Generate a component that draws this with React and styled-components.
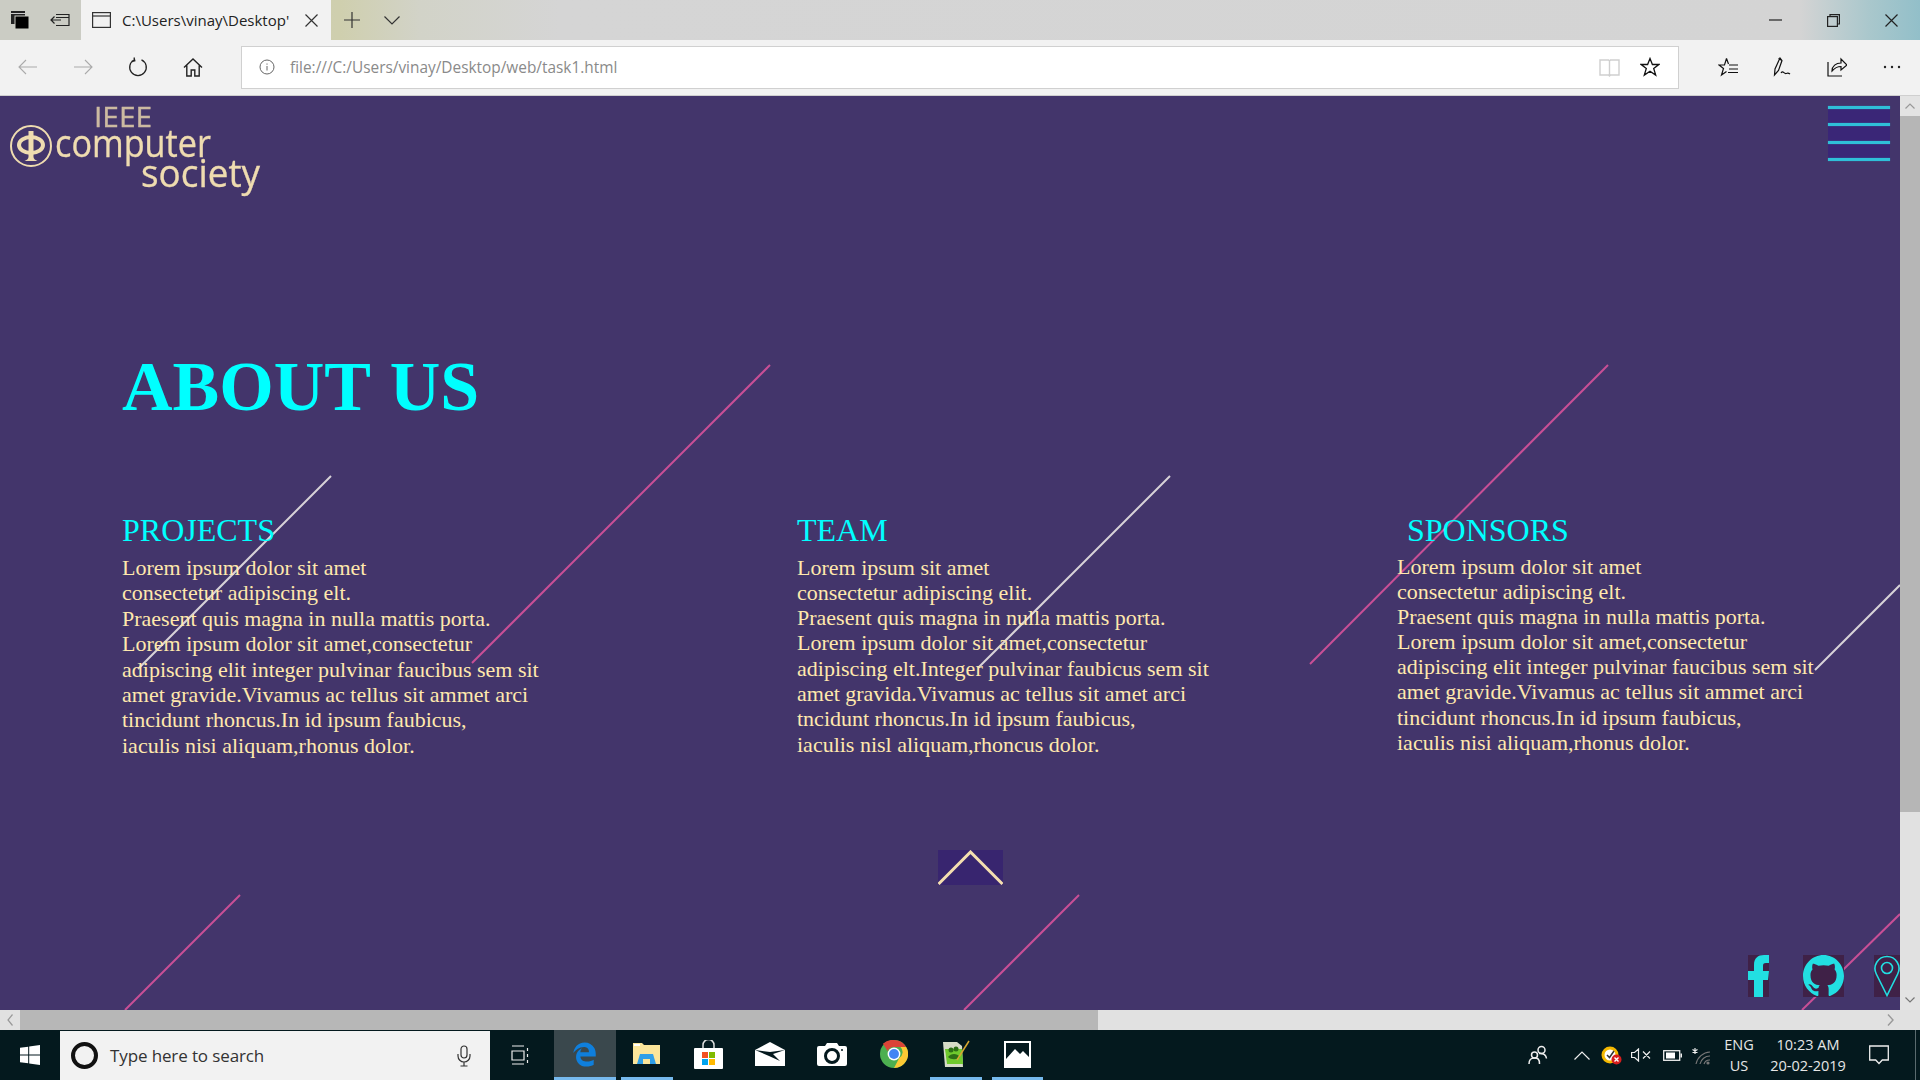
import React from 'react';
import styled, { createGlobalStyle } from 'styled-components';
import { FaEdgeLegacy } from 'react-icons/fa';

const Global = createGlobalStyle`
  html, body { margin: 0; padding: 0; width: 1920px; height: 1080px; overflow: hidden; background: #43356b; }
  * { box-sizing: border-box; }
`;

const UI = `"Open Sans", "Noto Sans", sans-serif`;

const Screen = styled.div`
  width: 1920px; height: 1080px; display: flex; flex-direction: column; overflow: hidden; font-family: ${UI};
`;

/* ---------- title bar ---------- */
const TitleBar = styled.div`
  height: 40px; flex: none; display: flex; align-items: stretch;
  background: linear-gradient(90deg, #cbccc4 0, #cbccc4 81px, #cfcfae 340px, #d2d3c8 420px, #d5d5d5 560px, #d4d4d4 1800px, #a9c7cc 1870px, #92bfc9 1920px);
`;
const ChromeBtn = styled.div`
  width: ${p => p.$w}px; flex: none; display: flex; align-items: center; justify-content: center; color: ${p => p.$c || '#1a1a1a'};
`;
const Tab = styled.div`
  width: 250px; margin-left: 1px; flex: none; background: #f2f2f2; display: flex; align-items: center; padding-left: 11px; position: relative;
`;
const TabTitle = styled.span`
  margin-left: 11px; width: 168px; overflow: hidden; white-space: nowrap; font-size: 15px; color: #222;
`;
const TabClose = styled.span`
  margin-left: 15px; display: flex;
`;
const Grow = styled.div` flex: 1; `;

/* ---------- toolbar ---------- */
const Toolbar = styled.div`
  height: 56px; flex: none; display: flex; align-items: center; background: #f2f2f2; border-bottom: 1px solid #cfcfcf; padding-bottom: 1px;
`;
const ToolBtn = styled.div`
  width: 55px; height: 55px; flex: none; display: flex; align-items: center; justify-content: center; padding-right: ${p => p.$pr || 0}px;
`;
const Address = styled.div`
  width: 1438px; height: 43px; margin: 0 21px; flex: none; background: #fff; border: 1.5px solid #d0d0d0;
  display: flex; align-items: center; padding: 0 18px 0 17px;
`;
const Url = styled.span`
  margin-left: 15px; flex: 1; font-size: 15.4px; color: #8a8a8a;
`;
const AddrIcon = styled.span`
  display: flex; margin-left: ${p => p.$ml || 0}px;
`;

/* ---------- viewport ---------- */
const ViewRow = styled.div`
  height: 914px; flex: none; display: flex;
`;
const Page = styled.main`
  width: 1900px; height: 914px; flex: none; position: relative; overflow: hidden; background: #43356b; font-family: "Liberation Serif", "Times New Roman", serif;
`;
const Lines = styled.svg`
  position: absolute; left: 0; top: 0; width: 1900px; height: 914px;
`;
const Content = styled.div`
  position: relative; display: flex; flex-direction: column; height: 100%;
`;
const Header = styled.header`
  height: 110px; display: flex; justify-content: space-between; align-items: flex-start;
`;
const LogoSvg = styled.svg`
  width: 280px; height: 110px; display: block;
  text { font-family: "Open Sans", "Noto Sans", sans-serif; fill: #efdcb0; stroke: #efdcb0; stroke-width: 0.35px; }
  filter: blur(0.5px);
`;
const Burger = styled.div`
  width: 62px; height: 55px; margin: 10px 10px 0 0; display: flex; flex-direction: column; justify-content: space-between; background: #3a2677;
`;
const BurgerBar = styled.span`
  display: block; height: 3px; background: #2fbfd8; box-shadow: 0 0 1px #2fbfd8;
`;
const Title = styled.h1`
  margin: 141px 0 0 122px; font-size: 70px; line-height: 80px; font-weight: 700; color: #00ffff; word-spacing: 2.5px;
`;
const Columns = styled.section`
  margin-top: 85px; padding-left: 122px; display: grid; grid-template-columns: 675px 600px 1fr;
`;
const Heading = styled.h2`
  margin: 0 0 0 ${p => p.$indent || 0}px; font-size: 32px; line-height: 37px; font-weight: 400; color: #00ffff;
`;
const Body = styled.p`
  margin: ${p => p.$top}px 0 0 ${p => p.$left || 0}px; font-size: 22px; line-height: ${p => p.$lh || 25.3}px; color: #ffe8ad; white-space: nowrap;
`;
const UpRow = styled.div`
  margin-top: ${p => p.$mt}px; padding-left: 938px;
`;
const UpBtn = styled.div`
  width: 65px; height: 35px; background: #38256f; display: flex;
`;
const Socials = styled.div`
  margin-top: 70px; display: flex; justify-content: flex-end; gap: 30px;
`;
const SocialBox = styled.div`
  width: ${p => p.$w}px; height: 42px; background: #3f2147; display: flex; margin-left: ${p => p.$ml || 0}px;
`;

/* ---------- scrollbars ---------- */
const VBar = styled.div`
  width: 20px; flex: none; background: #e1e1e1; display: flex; flex-direction: column;
`;
const VArrow = styled.div`
  height: 20px; flex: none; display: flex; align-items: center; justify-content: center; background: #e3e3e3;
`;
const VThumb = styled.div`
  height: 696px; flex: none; background: #b6b6b6;
`;
const HBar = styled.div`
  height: 20px; flex: none; display: flex; background: #e1e1e1;
`;
const HArrow = styled.div`
  width: ${p => p.$w || 20}px; flex: none; display: flex; align-items: center; justify-content: center;
`;
const HThumb = styled.div`
  width: 1078px; flex: none; background: #b7b7b7;
`;

/* ---------- taskbar ---------- */
const Taskbar = styled.footer`
  height: 50px; flex: none; display: flex; align-items: stretch; background: #04191e; color: #eee;
`;
const Start = styled.div`
  width: 60px; flex: none; display: flex; align-items: center; justify-content: center;
`;
const Search = styled.div`
  width: 430px; flex: none; margin-top: 1px; background: #f2f2f2; display: flex; align-items: center; padding: 0 19px 0 11px;
`;
const Ring = styled.span`
  width: 27px; height: 27px; border: 4px solid #111; border-radius: 50%; flex: none;
`;
const SearchText = styled.span`
  margin-left: 12px; flex: 1; font-size: 17px; color: #333; letter-spacing: -0.12px;
`;
const TaskView = styled.div`
  width: 64px; flex: none; display: flex; align-items: center; justify-content: center; padding-right: 4px;
`;
const Tile = styled.div`
  width: 61.8px; flex: none; position: relative; display: flex; align-items: center; justify-content: center; background: ${p => p.$active ? '#3a484d' : 'transparent'};
  padding-bottom: 2px;
  ${p => p.$open ? `&::after { content: ''; position: absolute; left: ${p.$active ? 0 : 5}px; right: ${p.$active ? 0 : 5}px; bottom: 0; height: 3px; background: #76b9ed; }` : ''}
`;
const TrayItem = styled.div`
  width: ${p => p.$w}px; margin-left: ${p => p.$ml || 0}px; flex: none; display: flex; flex-direction: column; align-items: center; justify-content: center; font-size: 14.5px; line-height: 21px; color: #e6e6e6; white-space: nowrap;
`;
const ShowDesktop = styled.div`
  width: 15px; flex: none; position: relative;
  &::before { content: ''; position: absolute; left: 10px; top: 0; bottom: 0; width: 1px; background: #5a6a6e; }
`;

/* ---------- icons ---------- */
const Line = ({ w = 16, h = 16, sw = 1.2, c = '#222', vb, children }) => (
  <svg width={w} height={h} viewBox={vb || `0 0 ${w} ${h}`} fill="none" stroke={c} strokeWidth={sw}>{children}</svg>
);

const GITHUB = 'M8 0C3.58 0 0 3.58 0 8c0 3.54 2.29 6.53 5.47 7.59.4.07.55-.17.55-.38 0-.19-.01-.82-.01-1.49-2.01.37-2.53-.49-2.69-.94-.09-.23-.48-.94-.82-1.13-.28-.15-.68-.52-.01-.53.63-.01 1.08.58 1.23.82.72 1.21 1.87.87 2.33.66.07-.52.28-.87.51-1.07-1.78-.2-3.64-.89-3.64-3.95 0-.87.31-1.59.82-2.15-.08-.2-.36-1.02.08-2.12 0 0 .67-.21 2.2.82.64-.18 1.32-.27 2-.27.68 0 1.36.09 2 .27 1.53-1.04 2.2-.82 2.2-.82.44 1.1.16 1.92.08 2.12.51.56.82 1.27.82 2.15 0 3.07-1.87 3.75-3.65 3.95.29.25.54.73.54 1.48 0 1.07-.01 1.93-.01 2.2 0 .21.15.46.55.38A8.013 8.013 0 0016 8c0-4.42-3.58-8-8-8z';

const seg = [
  ['#c94f96', 770, 269, 472, 567],
  ['#d8d3d8', 331, 380, 138, 573],
  ['#d8d3d8', 1170, 380, 978, 572],
  ['#c94f96', 1608, 269, 1310, 568],
  ['#d8d3d8', 1900, 489, 1815, 574],
  ['#c94f96', 240, 799, 125, 914],
  ['#c94f96', 1079, 799, 964, 914],
  ['#c94f96', 1900, 818, 1802, 914],
];

const columns = [
  { h: 'PROJECTS', top: 6, lh: 25.4, lines: ['Lorem ipsum dolor sit amet', 'consectetur adipiscing elt.', 'Praesent quis magna in nulla mattis porta.', 'Lorem ipsum dolor sit amet,consectetur', 'adipiscing elit integer pulvinar faucibus sem sit', 'amet gravide.Vivamus ac tellus sit ammet arci', 'tincidunt rhoncus.In id ipsum faubicus,', 'iaculis nisi aliquam,rhonus dolor.'] },
  { h: 'TEAM', top: 5.5, lines: ['Lorem ipsum sit amet', 'consectetur adipiscing elit.', 'Praesent quis magna in nulla mattis porta.', 'Lorem ipsum dolor sit amet,consectetur', 'adipiscing elt.Integer pulvinar faubicus sem sit', 'amet gravida.Vivamus ac tellus sit amet arci', 'tncidunt rhoncus.In id ipsum faubicus,', 'iaculis nisl aliquam,rhoncus dolor.'] },
  { h: 'SPONSORS', indent: 10, top: 5, lh: 25.1, lines: ['Lorem ipsum dolor sit amet', 'consectetur adipiscing elt.', 'Praesent quis magna in nulla mattis porta.', 'Lorem ipsum dolor sit amet,consectetur', 'adipiscing elit integer pulvinar faucibus sem sit', 'amet gravide.Vivamus ac tellus sit ammet arci', 'tincidunt rhoncus.In id ipsum faubicus,', 'iaculis nisi aliquam,rhonus dolor.'] },
];

const ArrowIcon = ({ dir, c }) => (
  <Line w={20} h={16} c={c} sw={1.1}>
    {dir === 'l' ? <path d="M1 8h18M8 1 1 8l7 7" /> : <path d="M1 8h18M12 1l7 7-7 7" />}
  </Line>
);

export default function App() {
  return (
    <Screen>
      <Global />
      <TitleBar>
        <ChromeBtn $w={40}>
          <svg width="18" height="18" viewBox="0 0 18 18"><rect x="0" y="0" width="14" height="13" fill="#222" /><rect x="0" y="2" width="14" height="1" fill="#ccc" /><rect x="4" y="5" width="14" height="13" fill="#000" stroke="#cbccc4" strokeWidth="1" /></svg>
        </ChromeBtn>
        <ChromeBtn $w={40}>
          <Line w={20} h={14}><path d="M6 1.5h13v11H6M1 7h10M4.5 3.5 1 7l3.5 3.5M6 4.5h13" /></Line>
        </ChromeBtn>
        <Tab>
          <Line w={19} h={16} c="#333"><rect x=".6" y=".6" width="17.8" height="14.8" /><path d="M.6 4h17.8" /></Line>
          <TabTitle>C:\Users\vinay\Desktop'</TabTitle>
          <TabClose><Line w={13} h={13} c="#333"><path d="M.5.5l12 12M12.5.5l-12 12" /></Line></TabClose>
        </Tab>
        <ChromeBtn $w={41}><Line w={16} h={16} c="#333"><path d="M8 0v16M0 8h16" /></Line></ChromeBtn>
        <ChromeBtn $w={40}><Line w={16} h={9} c="#333"><path d="M.5.5 8 8 15.5.5" /></Line></ChromeBtn>
        <Grow />
        <ChromeBtn $w={58}><Line w={13} h={2} c="#222"><path d="M0 1h13" /></Line></ChromeBtn>
        <ChromeBtn $w={58}><Line w={13} h={13} c="#222"><rect x=".6" y="2.6" width="9.8" height="9.8" /><path d="M3 2.6V.6h9.4V10h-2" /></Line></ChromeBtn>
        <ChromeBtn $w={58}><Line w={13} h={13} c="#222"><path d="M.5.5l12 12M12.5.5l-12 12" /></Line></ChromeBtn>
      </TitleBar>

      <Toolbar>
        <ToolBtn><ArrowIcon dir="l" c="#aaa" /></ToolBtn>
        <ToolBtn><ArrowIcon dir="r" c="#aaa" /></ToolBtn>
        <ToolBtn><Line w={20} h={20} c="#222" sw={1.3}><path d="M6.5 2.8a8.3 8.3 0 1 0 7 0M6 .5l.8 3.2L3.6 4.5" /></Line></ToolBtn>
        <ToolBtn><Line w={20} h={19} c="#222" sw={1.4}><path d="M1 9.5 10 1l9 8.5M3.8 7.5V18h4.4v-6h3.6v6h4.4V7.5" /></Line></ToolBtn>
        <Address>
          <AddrIcon><Line w={16} h={16} c="#666" sw={1}><circle cx="8" cy="8" r="7" /><path d="M8 7v4.5M8 4.5v1.2" /></Line></AddrIcon>
          <Url>file:///C:/Users/vinay/Desktop/web/task1.html</Url>
          <AddrIcon><Line w={21} h={19} c="#cfcfcf" sw={1.4}><path d="M1 2h8.5l1 1 1-1H20v15h-8.5l-1 1-1-1H1zM10.5 3v14" /></Line></AddrIcon>
          <AddrIcon $ml={20}><Line w={20} h={20} c="#111" sw={1.3}><path d="M10 1.500l2.400 6h6.400l-5.100 4 2 6.600L10 14.300 4.300 18.100l2-6.600-5.100-4h6.400z" /></Line></AddrIcon>
        </Address>
        <ToolBtn><Line w={20} h={20} c="#111" sw={1.2}><path d="M8.500 1.500l2 5.500M8.500 1.500 6.500 8H1l4.500 3.500L3.500 18l5-3.500M11 8h9M11 12h9M10 15.500h10" /></Line></ToolBtn>
        <ToolBtn><Line w={20} h={20} c="#111" sw={1.2}><path d="M7 1 2 12l-.5 6 4-4.500L9 3.500zM5.500 1.500l3.500 2M8 16c2-3 3 1 5 .500s2-1 4 .500" /></Line></ToolBtn>
        <ToolBtn $pr={2}><Line w={20} h={20} c="#111" sw={1.2}><path d="M1 5v14h14M5 14c0-5 4-8 9-8V2l6 6-6 5V9.500c-4 0-6 1-9 4.500z" /></Line></ToolBtn>
        <ToolBtn><svg width="20" height="4" viewBox="0 0 20 4" fill="#222"><circle cx="2" cy="2" r="1.200" /><circle cx="9" cy="2" r="1.200" /><circle cx="16" cy="2" r="1.200" /></svg></ToolBtn>
      </Toolbar>

      <ViewRow>
        <Page>
          <Lines viewBox="0 0 1900 914">
            {seg.map(([c, x1, y1, x2, y2]) => (
              <line key={`${x1}-${y1}`} x1={x1} y1={y1} x2={x2} y2={y2} stroke={c} strokeWidth="2" />
            ))}
          </Lines>
          <Content>
            <Header>
              <LogoSvg viewBox="0 0 280 110">
                <text x="94" y="31" fontSize="28" textLength="58" lengthAdjust="spacingAndGlyphs" opacity="0.8">IEEE</text>
                <text x="55" y="61" fontSize="38" textLength="156" lengthAdjust="spacingAndGlyphs">computer</text>
                <text x="141" y="91" fontSize="38" textLength="119" lengthAdjust="spacingAndGlyphs">society</text>
                <g fill="none" stroke="#efdcb0">
                  <circle cx="31" cy="50" r="20" strokeWidth="2" />
                  <ellipse cx="31" cy="49" rx="12" ry="8" strokeWidth="4" />
                </g>
                <path d="M28.500 35h5v26c0 2 2 3 4 4H24.500c2-1 4-2 4-4z" fill="#efdcb0" />
              </LogoSvg>
              <Burger>
                <BurgerBar /><BurgerBar /><BurgerBar /><BurgerBar />
              </Burger>
            </Header>
            <Title>ABOUT US</Title>
            <Columns>
              {columns.map(col => (
                <div key={col.h}>
                  <Heading $indent={col.indent}>{col.h}</Heading>
                  <Body $top={col.top} $left={col.left} $lh={col.lh}>
                    {col.lines.map(l => <React.Fragment key={l}>{l}<br /></React.Fragment>)}
                  </Body>
                </div>
              ))}
            </Columns>
            <UpRow $mt={92}>
              <UpBtn>
                <svg width="65" height="35" viewBox="0 0 65 35" fill="none" stroke="#f5dfb0" strokeWidth="3"><path d="M0.500 34 32.500 2 64.500 34" /></svg>
              </UpBtn>
            </UpRow>
            <Socials>
              <SocialBox $w={21}>
                <svg width="21" height="42" viewBox="0 0 21 42" fill="#22dfe2"><path d="M6 42V25H0v-9h6v-6C6 3 10 0 16 0h5v8h-3c-2.500 0-3 1-3 3v5h6l-1 9h-5v17z" /></svg>
              </SocialBox>
              <SocialBox $w={41} $ml={4}>
                <svg width="41" height="42" viewBox="0 0 16 16" preserveAspectRatio="none" fill="#22dfe2"><path d={GITHUB} /></svg>
              </SocialBox>
              <SocialBox $w={26}>
                <svg width="26" height="42" viewBox="0 0 26 42" fill="none" stroke="#22dfe2" strokeWidth="1.600"><path d="M13 40.500 2.300 19a12 12 0 1 1 21.400 0z" /><circle cx="13" cy="13" r="5.500" /></svg>
              </SocialBox>
            </Socials>
          </Content>
        </Page>
        <VBar>
          <VArrow><Line w={10} h={6} c="#999"><path d="M.5 5.500 5 1l4.500 4.500" /></Line></VArrow>
          <VThumb />
          <Grow />
          <VArrow><Line w={10} h={6} c="#777"><path d="M.5.5 5 5l4.500-4.500" /></Line></VArrow>
        </VBar>
      </ViewRow>
      <HBar>
        <HArrow><Line w={6} h={12} c="#999"><path d="M5.500.5 1 6l4.500 5.500" /></Line></HArrow>
        <HThumb />
        <Grow />
        <HArrow $w={60}><Line w={7} h={12} c="#999" sw={1.4}><path d="M1 .5 6 6l-5 5.500" /></Line></HArrow>
      </HBar>

      <Taskbar>
        <Start>
          <svg width="20" height="20" viewBox="0 0 20 20" fill="#fff"><path d="M0 2.800 8.200 1.700V9.500H0zM9.200 1.500 20 0V9.500H9.200zM0 10.500H8.200V18.300L0 17.200zM9.200 10.500H20V20L9.200 18.500z" /></svg>
        </Start>
        <Search>
          <Ring />
          <SearchText>Type here to search</SearchText>
          <Line w={14} h={22} c="#333" sw={1.2}><rect x="4" y="1" width="6" height="12" rx="3" /><path d="M1 9v2a6 6 0 0 0 12 0V9M7 17v4M3.500 21h7" /></Line>
        </Search>
        <TaskView>
          <Line w={20} h={20} c="#eee" sw={1.2}><path d="M2 1h12M2 6h12v9H2zM2 19h12M17.500 3v3M17.500 9v3M17.500 15v3" /></Line>
        </TaskView>
        <Tile $active $open><FaEdgeLegacy size={25} color="#0f7fdc" /></Tile>
        <Tile $open>
          <svg width="27" height="24" viewBox="0 0 27 24"><path d="M0 1h9l2 2h16v19H0z" fill="#fbe59a" /><path d="M1 2h6v2H1z" fill="#fff" /><path d="M7 12h13l3 10H4z" fill="#2f9fe8" /><path d="M10 17h7v5h-7z" fill="#fbe59a" /></svg>
        </Tile>
        <Tile>
          <svg width="29" height="29" viewBox="0 0 29 29"><path d="M9 9V5a5.500 5.500 0 0 1 11 0v4" fill="none" stroke="#ddd" strokeWidth="1.500" /><rect x="0" y="8" width="29" height="21" rx="1" fill="#fff" /><rect x="8" y="12" width="6" height="6" fill="#f25022" /><rect x="15" y="12" width="6" height="6" fill="#7fba00" /><rect x="8" y="19" width="6" height="6" fill="#00a4ef" /><rect x="15" y="19" width="6" height="6" fill="#ffb900" /></svg>
        </Tile>
        <Tile>
          <svg width="30" height="24" viewBox="0 0 30 24"><path d="M0 8 15 0l15 8v16H0z" fill="#fff" /><path d="M0 8l14 6 11 5-7-7 12-4-15 2z" fill="#04191e" /></svg>
        </Tile>
        <Tile>
          <svg width="30" height="24" viewBox="0 0 30 24"><path d="M2 4h6l2-3h10l2 3h6a2 2 0 0 1 2 2v16a2 2 0 0 1-2 2H2a2 2 0 0 1-2-2V6a2 2 0 0 1 2-2z" fill="#fff" /><circle cx="15" cy="14" r="6.500" fill="none" stroke="#04191e" strokeWidth="3" /><circle cx="25" cy="8" r="1" fill="#04191e" /></svg>
        </Tile>
        <Tile>
          <svg width="28" height="28" viewBox="0 0 48 48"><circle cx="24" cy="24" r="24" fill="#4caf50" /><path d="M24 0a24 24 0 0 1 20.800 12H24a12 12 0 0 0-11 7L5 6.500A24 24 0 0 1 24 0z" fill="#db4437" /><path d="M44.800 12A24 24 0 0 1 24 48l9-17a12 12 0 0 0 2-19z" fill="#fcc934" /><circle cx="24" cy="24" r="11" fill="#fff" /><circle cx="24" cy="24" r="8.500" fill="#4285f4" /></svg>
        </Tile>
        <Tile $open>
          <svg width="28" height="28" viewBox="0 0 28 28"><path d="M1 2h14l5 4 1 21H3z" fill="#d7dcc8" /><path d="M3 9h17l1 15H5z" fill="#6fc92e" /><circle cx="9" cy="10" r="2.500" fill="#2d6e17" /><circle cx="14" cy="9" r="2.500" fill="#2d6e17" /><path d="M6 17c3-4 9-4 12 0-3 3-9 3-12 0z" fill="#2d6e17" /><path d="M15 20 27 1" stroke="#d8a830" strokeWidth="1.500" /></svg>
        </Tile>
        <Tile $open>
          <svg width="27" height="27" viewBox="0 0 27 27"><rect width="27" height="27" fill="#fff" /><rect x="2" y="2" width="23" height="21" fill="#04191e" /><path d="M2 23v-5l9-10 5 5 3-3 6 6v7z" fill="#fff" /></svg>
        </Tile>
        <Grow />
        <TrayItem $w={40}>
          <Line w={20} h={20} c="#eee" sw={1.5}><circle cx="6.500" cy="10" r="3" /><circle cx="13.500" cy="5" r="3.500" /><path d="M1 19c0-5 2-6 5.500-6s5 1 5 6M11 8.500c4-.5 7 1 7.500 5" /></Line>
        </TrayItem>
        <TrayItem $w={30} $ml={9}><Line w={16} h={9} c="#eee"><path d="M.5 8.500 8 1l7.500 7.500" /></Line></TrayItem>
        <TrayItem $w={30}>
          <svg width="22" height="22" viewBox="0 0 22 22"><circle cx="9" cy="11" r="8.500" fill="#f5b800" /><circle cx="9" cy="11" r="5.500" fill="#fff" /><path d="M6 11l2.500 2.500L13 7" fill="none" stroke="#333" strokeWidth="1.500" /><circle cx="15.500" cy="15.500" r="5" fill="#d81e1e" /><path d="M13.500 13.500l4 4M17.500 13.500l-4 4" stroke="#fff" strokeWidth="1.400" /></svg>
        </TrayItem>
        <TrayItem $w={28}>
          <Line w={20} h={14} c="#eee"><path d="M.6 4.500h3L7.500 1v12L3.600 9.500h-3zM12 3.500l7 7M19 3.500l-7 7" /></Line>
        </TrayItem>
        <TrayItem $w={34}>
          <svg width="19" height="11" viewBox="0 0 19 11"><rect x=".7" y=".7" width="16" height="9.600" fill="none" stroke="#eee" strokeWidth="1.300" /><rect x="3" y="2.500" width="9" height="6" fill="#fff" /><rect x="17.500" y="3.500" width="1.500" height="4" fill="#eee" /></svg>
        </TrayItem>
        <TrayItem $w={26}>
          <svg width="20" height="20" viewBox="0 0 20 20" fill="none" stroke="#777" strokeWidth="1.200"><path d="M4 19a15 15 0 0 1 14-12M8 19a10 10 0 0 1 10-8M12 19a6 6 0 0 1 6-4" /><circle cx="16" cy="18" r="1" fill="#999" /><path d="M3 3v6M.5 4.500l5 3M5.500 4.500l-5 3" stroke="#eee" /></svg>
        </TrayItem>
        <TrayItem $w={48}><span>ENG</span><span>US</span></TrayItem>
        <TrayItem $w={90}><span>10:23 AM</span><span>20-02-2019</span></TrayItem>
        <TrayItem $w={52}>
          <Line w={20} h={20} c="#eee" sw={1.3}><path d="M.7 1h18.600v14h-6L10 18.500 6.700 15h-6z" /></Line>
        </TrayItem>
        <ShowDesktop />
      </Taskbar>
    </Screen>
  );
}
